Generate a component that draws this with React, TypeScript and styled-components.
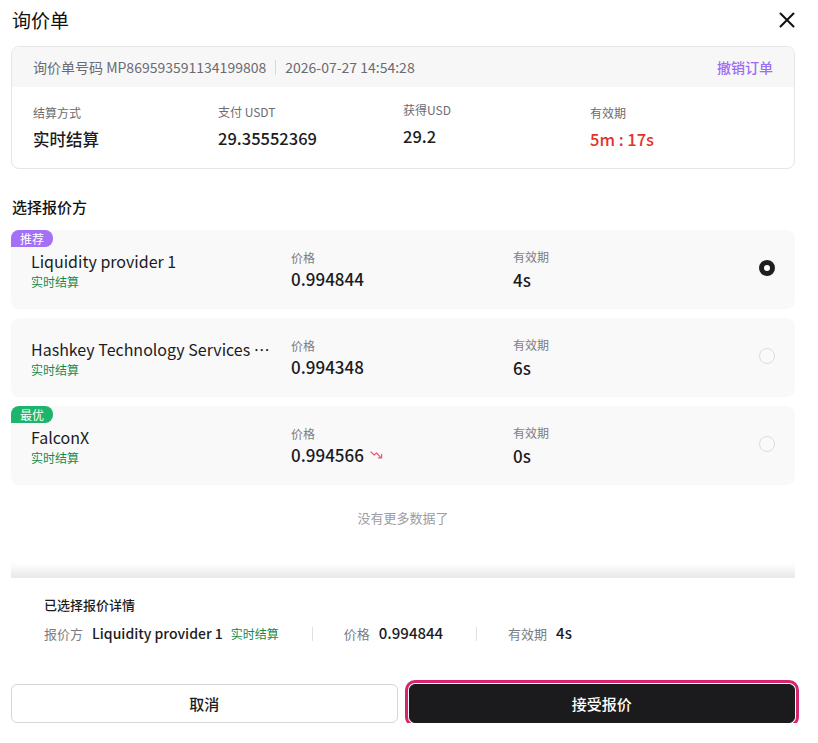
import React, { useState } from 'react';
import styled, { createGlobalStyle } from 'styled-components';

const GlobalStyle = createGlobalStyle`
  * {
    box-sizing: border-box;
  }

  body {
    margin: 0;
    background: #fff;
    color: #1c1c1e;
    font-family: 'Noto Sans CJK SC', 'Noto Sans', sans-serif;
  }
`;

type Quote = {
  id: number;
  name: string;
  price: string;
  expires: string;
  tag?: 'recommend' | 'best';
  falling?: boolean;
};

const quotes: Quote[] = [
  { id: 1, name: 'Liquidity provider 1', price: '0.994844', expires: '4s', tag: 'recommend' },
  { id: 2, name: 'Hashkey Technology Services Limited', price: '0.994348', expires: '6s' },
  { id: 3, name: 'FalconX', price: '0.994566', expires: '0s', tag: 'best', falling: true },
];

const CloseIcon = () => (
  <svg width="16" height="16" viewBox="0 0 16 16" fill="none">
    <path d="M1.5 1.5l13 13M14.5 1.5l-13 13" stroke="#111" strokeWidth="2" strokeLinecap="round" />
  </svg>
);

const TrendDown = () => (
  <svg width="13" height="8" viewBox="0 0 13 8" fill="none">
    <path d="M1 1l3.2 3 2.4-2 4.4 4.6" stroke="#f2587a" strokeWidth="1.2" strokeLinecap="round" strokeLinejoin="round" />
    <path d="M11.6 3.4v3.4H8.3" stroke="#f2587a" strokeWidth="1.2" strokeLinecap="round" strokeLinejoin="round" />
  </svg>
);

const App = () => {
  const [selected, setSelected] = useState(1);
  const current = quotes.find((q) => q.id === selected)!;

  return (
    <Page>
      <GlobalStyle />
      <Header>
        <Title>询价单</Title>
        <CloseButton>
          <CloseIcon />
        </CloseButton>
      </Header>

      <InfoCard>
        <InfoHead>
          <span>询价单号码 MP869593591134199808</span>
          <HeadDivider />
          <span>2026-07-27 14:54:28</span>
          <CancelOrder>撤销订单</CancelOrder>
        </InfoHead>
        <InfoBody>
          <InfoCell $shift={1}>
            <InfoLabel>结算方式</InfoLabel>
            <InfoValue>实时结算</InfoValue>
          </InfoCell>
          <InfoCell $shift={0}>
            <InfoLabel>支付 USDT</InfoLabel>
            <InfoValue>29.35552369</InfoValue>
          </InfoCell>
          <InfoCell $shift={-2}>
            <InfoLabel>获得USD</InfoLabel>
            <InfoValue>29.2</InfoValue>
          </InfoCell>
          <InfoCell $shift={1}>
            <InfoLabel>有效期</InfoLabel>
            <InfoValue $danger>5m : 17s</InfoValue>
          </InfoCell>
        </InfoBody>
      </InfoCard>

      <SectionTitle>选择报价方</SectionTitle>

      <QuoteList>
        {quotes.map((quote) => (
          <QuoteCard key={quote.id} onClick={() => setSelected(quote.id)}>
            {quote.tag && <Tag $kind={quote.tag}>{quote.tag === 'best' ? '最优' : '推荐'}</Tag>}
            <NameCol>
              <ProviderName>{quote.name}</ProviderName>
              <Settle>实时结算</Settle>
            </NameCol>
            <StatCol>
              <StatLabel>价格</StatLabel>
              <StatValue>
                {quote.price}
                {quote.falling && <TrendDown />}
              </StatValue>
            </StatCol>
            <StatCol>
              <StatLabel>有效期</StatLabel>
              <StatValue $low>{quote.expires}</StatValue>
            </StatCol>
            <Radio $checked={selected === quote.id} />
          </QuoteCard>
        ))}
      </QuoteList>

      <NoMore>没有更多数据了</NoMore>
      <ScrollFade />

      <Details>
        <DetailsTitle>已选择报价详情</DetailsTitle>
        <DetailsRow>
          <DetailItem>
            <DetailLabel>报价方</DetailLabel>
            <DetailValue>{current.name}</DetailValue>
            <DetailSettle>实时结算</DetailSettle>
          </DetailItem>
          <DetailDivider />
          <DetailItem>
            <DetailLabel>价格</DetailLabel>
            <DetailNumber>{current.price}</DetailNumber>
          </DetailItem>
          <DetailDivider />
          <DetailItem>
            <DetailLabel>有效期</DetailLabel>
            <DetailNumber>{current.expires}</DetailNumber>
          </DetailItem>
        </DetailsRow>
      </Details>

      <Actions>
        <Button>取消</Button>
        <Button $primary>接受报价</Button>
      </Actions>
    </Page>
  );
};

export default App;

const Page = styled.div`
  width: 818px;
  padding: 0 23px 0 11px;
`;

const Header = styled.div`
  display: flex;
  align-items: center;
  justify-content: space-between;
  height: 40px;
`;

const Title = styled.h2`
  margin: 0 0 0 1px;
  font-size: 19px;
  font-weight: 400;
  line-height: 40px;
  color: #111;
`;

const CloseButton = styled.button`
  display: flex;
  padding: 0;
  border: none;
  background: none;
  cursor: pointer;
`;

const InfoCard = styled.div`
  margin-top: 6px;
  border: 1px solid #e5e5e7;
  border-radius: 8px;
  overflow: hidden;
`;

const InfoHead = styled.div`
  display: flex;
  align-items: center;
  height: 40px;
  padding: 0 21px;
  background: #f7f7f8;
  font-size: 14px;
  color: #6b6b70;
`;

const HeadDivider = styled.span`
  width: 1px;
  height: 15px;
  margin: 0 9px;
  background: #d8d8dc;
`;

const CancelOrder = styled.span`
  margin-left: auto;
  font-size: 14px;
  font-weight: 500;
  color: #9b6cf5;
  cursor: pointer;
`;

const InfoBody = styled.div`
  display: grid;
  grid-template-columns: 185px 185px 187px 1fr;
  height: 81px;
  padding: 16px 21px 0;
`;

const InfoCell = styled.div<{ $shift: number }>`
  display: flex;
  flex-direction: column;
  gap: 6px;
  transform: translateY(${(p) => p.$shift}px);
`;

const InfoLabel = styled.span`
  font-size: 12px;
  line-height: 18px;
  color: #6b6b70;
`;

const InfoValue = styled.span<{ $danger?: boolean }>`
  font-size: 16.5px;
  font-weight: 500;
  line-height: 22px;
  color: ${(p) => (p.$danger ? '#e5322d' : '#1c1c1e')};
`;

const SectionTitle = styled.h3`
  margin: 27px 0 0 1px;
  font-size: 15px;
  font-weight: 500;
  line-height: 22px;
  color: #111;
`;

const QuoteList = styled.div`
  display: flex;
  flex-direction: column;
  gap: 9px;
  margin-top: 12px;
`;

const QuoteCard = styled.div`
  position: relative;
  display: grid;
  grid-template-columns: 260px 222px 1fr 16px;
  align-items: center;
  height: 79px;
  padding: 0 20px;
  border-radius: 8px;
  background: #f9f9fa;
  cursor: pointer;
`;

const Tag = styled.span<{ $kind: 'recommend' | 'best' }>`
  position: absolute;
  top: 0;
  left: 0;
  height: 17px;
  padding: 0 9px;
  border-radius: 8px 8px 8px 0;
  background: ${(p) => (p.$kind === 'best' ? '#1cb56b' : '#a370f7')};
  font-size: 12px;
  line-height: 17px;
  color: #fff;
`;

const NameCol = styled.div`
  display: flex;
  flex-direction: column;
  min-width: 0;
  padding-right: 14px;
`;

const ProviderName = styled.span`
  overflow: hidden;
  white-space: nowrap;
  text-overflow: ellipsis;
  font-size: 16px;
  font-weight: 400;
  line-height: 22px;
  color: #1c1c1e;
`;

const Settle = styled.span`
  margin-top: 1px;
  font-size: 12px;
  line-height: 17px;
  color: #138a4a;
`;

const StatCol = styled.div`
  display: flex;
  flex-direction: column;
  gap: 2px;
`;

const StatLabel = styled.span`
  font-size: 12px;
  line-height: 17px;
  color: #7c7c82;
`;

const StatValue = styled.span<{ $low?: boolean }>`
  display: flex;
  align-items: center;
  gap: 6px;
  margin-top: ${(p) => (p.$low ? '2px' : '0')};
  font-size: 17px;
  font-weight: 500;
  line-height: 22px;
  color: #1c1c1e;
`;

const Radio = styled.span<{ $checked: boolean }>`
  width: 16px;
  height: 16px;
  margin-top: -3px;
  border-radius: 50%;
  border: ${(p) => (p.$checked ? '5px solid #1e1e20' : '1px solid #dcdce0')};
  background: ${(p) => (p.$checked ? '#fff' : '#fafafb')};
`;

const NoMore = styled.div`
  margin-top: 23px;
  font-size: 13px;
  line-height: 20px;
  text-align: center;
  color: #9c9ca2;
`;

const ScrollFade = styled.div`
  height: 15px;
  margin-top: 35px;
  background: linear-gradient(to bottom, rgba(233, 233, 235, 0), #e8e8ea);
`;

const Details = styled.div`
  padding: 17px 0 0 33px;
`;

const DetailsTitle = styled.div`
  font-size: 13px;
  font-weight: 500;
  line-height: 20px;
  color: #1c1c1e;
`;

const DetailsRow = styled.div`
  display: flex;
  align-items: center;
  margin-top: 8px;
  line-height: 20px;
`;

const DetailItem = styled.div`
  display: flex;
  align-items: baseline;
`;

const DetailLabel = styled.span`
  margin-right: 9px;
  font-size: 13px;
  color: #7c7c82;
`;

const DetailValue = styled.span`
  font-size: 14px;
  font-weight: 500;
  color: #1c1c1e;
`;

const DetailNumber = styled(DetailValue)`
  font-size: 15px;
`;

const DetailSettle = styled.span`
  margin-left: 8px;
  font-size: 12px;
  color: #138a4a;
`;

const DetailDivider = styled.span`
  width: 1px;
  height: 14px;
  margin: 0 31px 0 33px;
  background: #e0e0e3;
`;

const Actions = styled.div`
  display: grid;
  grid-template-columns: 1fr 1fr;
  gap: 11px;
  margin-top: 40px;
`;

const Button = styled.button<{ $primary?: boolean }>`
  height: 39px;
  border-radius: 6px;
  border: 1px solid ${(p) => (p.$primary ? '#1b1b1d' : '#d6d6da')};
  background: ${(p) => (p.$primary ? '#1b1b1d' : '#fff')};
  box-shadow: ${(p) => (p.$primary ? '0 0 0 1px #fff, 0 0 0 4px #d6246d' : 'none')};
  font-family: inherit;
  font-size: 15px;
  font-weight: 500;
  color: ${(p) => (p.$primary ? '#fff' : '#1c1c1e')};
  cursor: pointer;
`;
